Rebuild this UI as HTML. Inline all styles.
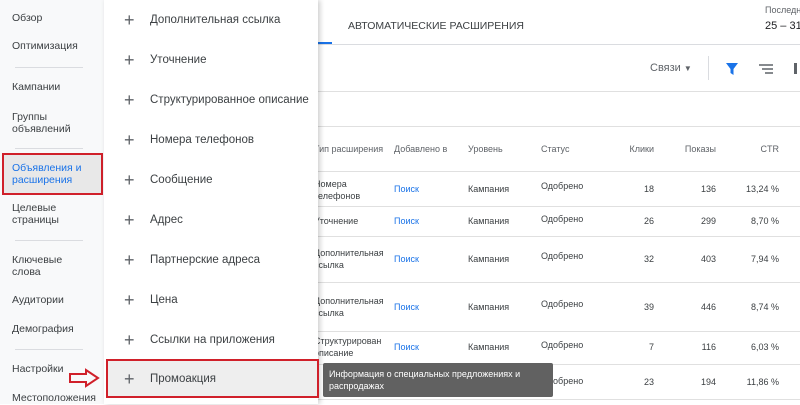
<!DOCTYPE html>
<html><head><meta charset="utf-8"><style>
*{margin:0;padding:0;box-sizing:border-box}
body{width:800px;height:404px;overflow:hidden;background:#fff;font-family:"Liberation Sans",Arial,sans-serif;position:relative;color:#3c4043}
.a{position:absolute;white-space:nowrap}
.sb{position:absolute;left:0;top:0;width:104px;height:404px;background:#f8f9fa}
.si{position:absolute;left:12px;font-size:10.5px;line-height:11.5px;color:#3c4043}
.dv{position:absolute;left:15px;width:68px;height:1px;background:#dadce0}
.menu{position:absolute;left:104px;top:0;width:214px;height:404px;background:#fff;box-shadow:2px 0 5px rgba(0,0,0,.2)}
.mi{position:absolute;left:0;width:214px;height:40px;font-size:11.5px;color:#3c4043}
.mi .p{position:absolute;left:20px;top:12px;font-size:18px;line-height:16px;color:#5f6368;font-weight:300}
.mi .t{position:absolute;left:46px;top:14px}
.hl{position:absolute;left:318px;width:482px;height:1px;background:#e0e0e0}
.c{position:absolute;font-size:9px;line-height:12px;color:#3c4043}
.r{text-align:right}
.bl{color:#1a73e8}
</style></head><body>
<div class="sb"></div>
<div class="si" style="top:13px">Обзор</div>
<div class="si" style="top:41px">Оптимизация</div>
<div class="dv" style="top:67px"></div>
<div class="si" style="top:82px">Кампании</div>
<div class="si" style="top:112px">Группы<br>объявлений</div>
<div class="dv" style="top:148px"></div>
<div style="position:absolute;left:2px;top:153px;width:101px;height:42px;background:#e8e8e8;border:2px solid #d0202a"></div>
<div class="si" style="top:163px;color:#1a73e8">Объявления и<br>расширения</div>
<div class="si" style="top:203px">Целевые<br>страницы</div>
<div class="dv" style="top:240px"></div>
<div class="si" style="top:255px">Ключевые<br>слова</div>
<div class="si" style="top:295px">Аудитории</div>
<div class="si" style="top:324px">Демография</div>
<div class="dv" style="top:349px"></div>
<div class="si" style="top:364px">Настройки</div>
<div class="si" style="top:393px">Местоположения</div>
<svg class="a" style="left:68px;top:368px" width="34" height="20"><path d="M2 6H18V2L30 10L18 18V14H2Z" fill="none" stroke="#d0202a" stroke-width="2"/></svg>

<div class="a" style="left:348px;top:20px;font-size:10.5px;color:#3c4043">АВТОМАТИЧЕСКИЕ РАСШИРЕНИЯ</div>
<div class="a" style="left:318px;top:44px;width:482px;height:1px;background:#dadce0"></div>
<div class="a" style="left:318px;top:42px;width:14px;height:2px;background:#1a73e8"></div>
<div class="a" style="left:765px;top:5px;font-size:9px;color:#5f6368">Последн</div>
<div class="a" style="left:765px;top:20px;font-size:11px;color:#202124">25 – 31 :</div>
<div class="a" style="left:650px;top:62px;font-size:11px;color:#5f6368">Связи <span style="font-size:8px">▼</span></div>
<div class="a" style="left:708px;top:56px;width:1px;height:24px;background:#dadce0"></div>
<svg class="a" style="left:725px;top:62px" width="14" height="14"><path d="M1 1H13L8.5 7V13L5.5 11V7Z" fill="#1a73e8"/></svg>
<svg class="a" style="left:758px;top:63px" width="16" height="12"><path d="M1 2H15M4 6H15M7 10H15" stroke="#5f6368" stroke-width="1.5"/></svg>
<div class="a" style="left:794px;top:63px;width:6px;height:11px;border-left:3px solid #5f6368"></div>
<div class="hl" style="top:91px"></div>
<div class="hl" style="top:126px"></div>
<div class="hl" style="top:171px"></div>
<div class="hl" style="top:206px"></div>
<div class="hl" style="top:236px"></div>
<div class="hl" style="top:282px"></div>
<div class="hl" style="top:331px"></div>
<div class="hl" style="top:364px"></div>
<div class="hl" style="top:399px"></div>

<div class="c" style="left:314px;top:143px;color:#5f6368">Тип расширения</div>
<div class="c" style="left:394px;top:143px;color:#5f6368">Добавлено в</div>
<div class="c" style="left:468px;top:143px;color:#5f6368">Уровень</div>
<div class="c" style="left:541px;top:143px;color:#5f6368">Статус</div>
<div class="c r" style="left:604px;width:50px;top:143px;color:#5f6368">Клики</div>
<div class="c r" style="left:666px;width:50px;top:143px;color:#5f6368">Показы</div>
<div class="c r" style="left:729px;width:50px;top:143px;color:#5f6368">CTR</div>

<div class="c" style="left:314px;top:178px">Номера<br>телефонов</div>
<div class="c bl" style="left:394px;top:183px">Поиск</div><div class="c" style="left:468px;top:183px">Кампания</div><div class="c" style="left:541px;top:180px">Одобрено</div>
<div class="c r" style="left:604px;width:50px;top:183px">18</div><div class="c r" style="left:666px;width:50px;top:183px">136</div><div class="c r" style="left:729px;width:50px;top:183px">13,24 %</div>

<div class="c" style="left:314px;top:215px">Уточнение</div>
<div class="c bl" style="left:394px;top:215px">Поиск</div><div class="c" style="left:468px;top:215px">Кампания</div><div class="c" style="left:541px;top:213px">Одобрено</div>
<div class="c r" style="left:604px;width:50px;top:215px">26</div><div class="c r" style="left:666px;width:50px;top:215px">299</div><div class="c r" style="left:729px;width:50px;top:215px">8,70 %</div>

<div class="c" style="left:314px;top:247px">Дополнительная<br>ссылка</div>
<div class="c bl" style="left:394px;top:253px">Поиск</div><div class="c" style="left:468px;top:253px">Кампания</div><div class="c" style="left:541px;top:250px">Одобрено</div>
<div class="c r" style="left:604px;width:50px;top:253px">32</div><div class="c r" style="left:666px;width:50px;top:253px">403</div><div class="c r" style="left:729px;width:50px;top:253px">7,94 %</div>

<div class="c" style="left:314px;top:295px">Дополнительная<br>ссылка</div>
<div class="c bl" style="left:394px;top:301px">Поиск</div><div class="c" style="left:468px;top:301px">Кампания</div><div class="c" style="left:541px;top:298px">Одобрено</div>
<div class="c r" style="left:604px;width:50px;top:301px">39</div><div class="c r" style="left:666px;width:50px;top:301px">446</div><div class="c r" style="left:729px;width:50px;top:301px">8,74 %</div>

<div class="c" style="left:314px;top:335px">Структурирован<br>описание</div>
<div class="c bl" style="left:394px;top:341px">Поиск</div><div class="c" style="left:468px;top:341px">Кампания</div><div class="c" style="left:541px;top:339px">Одобрено</div>
<div class="c r" style="left:604px;width:50px;top:341px">7</div><div class="c r" style="left:666px;width:50px;top:341px">116</div><div class="c r" style="left:729px;width:50px;top:341px">6,03 %</div>

<div class="c" style="left:541px;top:375px">Одобрено</div>
<div class="c r" style="left:604px;width:50px;top:376px">23</div><div class="c r" style="left:666px;width:50px;top:376px">194</div><div class="c r" style="left:729px;width:50px;top:376px">11,86 %</div>

<div class="a" style="left:323px;top:363px;width:230px;height:34px;background:#616161;border-radius:2px;color:#fff;font-size:9px;line-height:12px;padding:5px 6px;white-space:normal">Информация о специальных предложениях и распродажах</div>

<div class="menu">
<div class="mi" style="top:0"><span class="p">+</span><span class="t">Дополнительная ссылка</span></div>
<div class="mi" style="top:40px"><span class="p">+</span><span class="t">Уточнение</span></div>
<div class="mi" style="top:80px"><span class="p">+</span><span class="t">Структурированное описание</span></div>
<div class="mi" style="top:120px"><span class="p">+</span><span class="t">Номера телефонов</span></div>
<div class="mi" style="top:160px"><span class="p">+</span><span class="t">Сообщение</span></div>
<div class="mi" style="top:200px"><span class="p">+</span><span class="t">Адрес</span></div>
<div class="mi" style="top:240px"><span class="p">+</span><span class="t">Партнерские адреса</span></div>
<div class="mi" style="top:280px"><span class="p">+</span><span class="t">Цена</span></div>
<div class="mi" style="top:320px"><span class="p">+</span><span class="t">Ссылки на приложения</span></div>
<div class="mi" style="top:359px;left:2px;width:213px;height:39px;background:#eeeeee;border:2px solid #d0202a"><span class="p" style="left:16px;top:10px">+</span><span class="t" style="left:42px;top:12px">Промоакция</span></div>
</div>
</body></html>
